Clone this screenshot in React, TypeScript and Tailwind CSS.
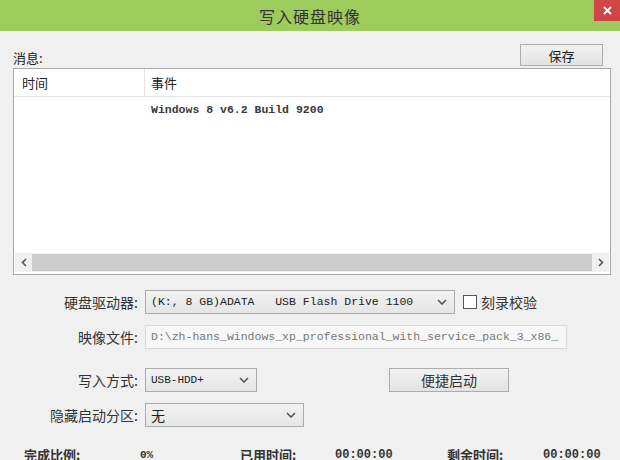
const cjk = "font-['Noto_Sans_CJK_SC','Noto_Sans',sans-serif]";
const mono = "font-['Liberation_Mono','Noto_Sans_CJK_SC',monospace]";

function Chevron() {
  return (
    <svg width="10" height="6" viewBox="0 0 10 6" className="shrink-0">
      <path d="M1 1 L5 5 L9 1" fill="none" stroke="#555" strokeWidth="1.6" />
    </svg>
  );
}

function Select({ width, text, textClass }: { width: string; text: string; textClass: string }) {
  return (
    <div
      className={`${width} h-[24px] flex items-center justify-between pl-[5px] pr-[7px] border border-[#acacac] bg-gradient-to-b from-[#f2f2f2] to-[#e5e5e5]`}
    >
      <span className={`${textClass} text-[#222] whitespace-pre`}>{text}</span>
      <Chevron />
    </div>
  );
}

function Label({ children }: { children: string }) {
  return <span className="w-[145px] pr-[7px] text-right text-[14px] text-[#333]">{children}</span>;
}

export default function App() {
  return (
    <div className={`w-[620px] h-[460px] bg-[#f0f0f0] overflow-hidden ${cjk} text-[13px] text-[#222]`}>
      {/* title bar */}
      <div className="h-[31px] bg-[#9dcb5c] flex items-center justify-center relative">
        <span className="text-[16px] text-[#333] tracking-[1px]">写入硬盘映像</span>
        <div className="absolute right-0 top-0 w-[26px] h-[21px] bg-[#d04545] flex items-center justify-center">
          <svg width="9" height="9" viewBox="0 0 9 9">
            <path d="M1 1 L8 8 M8 1 L1 8" stroke="#fff" strokeWidth="1.8" />
          </svg>
        </div>
      </div>

      {/* message header */}
      <div className="flex items-end justify-between pl-[13px] pr-[17px] h-[37px]">
        <span className="mb-[1px]">消息:</span>
        <button className="w-[83px] h-[22px] mb-[2px] border border-[#acacac] bg-gradient-to-b from-[#f2f2f2] to-[#e3e3e3] text-[13px] leading-none">
          保存
        </button>
      </div>

      {/* list box */}
      <div className="mx-[13px] mr-[9px] h-[207px] border border-[#a9a9a9] bg-white flex flex-col">
        <div className="h-[28px] flex border-b border-[#e5e5e5]">
          <div className="w-[131px] border-r border-[#e5e5e5] pl-[8px] flex items-center">时间</div>
          <div className="flex-1 pl-[6px] flex items-center">事件</div>
        </div>
        <div className="flex-1">
          <div className="pl-[137px] pt-[1px]">
            <span className={`${mono} text-[11.5px] font-bold text-[#3a3a3a]`}>Windows 8 v6.2 Build 9200</span>
          </div>
        </div>
        <div className="h-[19px] mb-[2px] flex items-center bg-[#f0f0f0] mx-[1px]">
          <div className="w-[17px] flex justify-center">
            <svg width="6" height="9" viewBox="0 0 6 9">
              <path d="M5 1 L1.5 4.5 L5 8" fill="none" stroke="#555" strokeWidth="1.6" />
            </svg>
          </div>
          <div className="flex-1 h-[17px] bg-[#cdcdcd]" />
          <div className="w-[17px] flex justify-center">
            <svg width="6" height="9" viewBox="0 0 6 9">
              <path d="M1 1 L4.5 4.5 L1 8" fill="none" stroke="#555" strokeWidth="1.6" />
            </svg>
          </div>
        </div>
      </div>

      {/* form */}
      <div className="mt-[15px] flex flex-col">
        <div className="flex items-center h-[24px]">
          <Label>硬盘驱动器:</Label>
          <Select width="w-[310px]" text="(K:, 8 GB)ADATA   USB Flash Drive 1100" textClass={`${mono} text-[11.5px]`} />
          <div className="ml-[8px] w-[14px] h-[14px] border border-[#555] bg-white" />
          <span className="ml-[4px] text-[14px] text-[#333]">刻录校验</span>
        </div>

        <div className="flex items-center h-[24px] mt-[11px]">
          <Label>映像文件:</Label>
          <div className="w-[422px] h-[24px] border border-[#d9d9d9] bg-[#f7f7f7] flex items-center pl-[5px] overflow-hidden">
            <span className={`${mono} text-[11.5px] text-[#777] whitespace-nowrap`}>
              D:\zh-hans_windows_xp_professional_with_service_pack_3_x86_
            </span>
          </div>
        </div>

        <div className="flex items-center h-[24px] mt-[19px]">
          <Label>写入方式:</Label>
          <Select width="w-[112px]" text="USB-HDD+" textClass={`${mono} text-[11px]`} />
          <button className="ml-[132px] w-[120px] h-[24px] border border-[#acacac] bg-gradient-to-b from-[#f2f2f2] to-[#e3e3e3] text-[14px] text-[#333]">
            便捷启动
          </button>
        </div>

        <div className="flex items-center h-[24px] mt-[11px]">
          <Label>隐藏启动分区:</Label>
          <Select width="w-[159px]" text="无" textClass="text-[14px]" />
        </div>

        <div className="flex items-center h-[20px] mt-[18px] font-bold text-[13px] text-[#333]">
          <span className="w-[140px] pl-[24px]">完成比例:</span>
          <span className={`${mono} w-[100px] text-[11px]`}>0%</span>
          <span className="w-[95px]">已用时间:</span>
          <span className={`${mono} w-[112px] text-[12px]`}>00:00:00</span>
          <span className="w-[96px]">剩余时间:</span>
          <span className={`${mono} text-[12px]`}>00:00:00</span>
        </div>
      </div>
    </div>
  );
}
